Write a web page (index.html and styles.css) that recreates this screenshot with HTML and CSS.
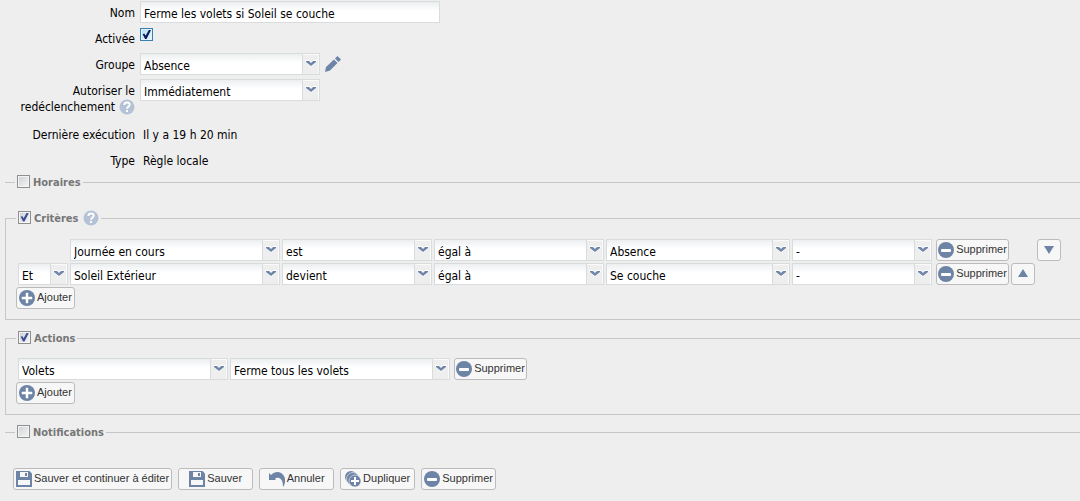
FILE: index.html
```html
<!DOCTYPE html>
<html lang="fr">
<head>
<meta charset="utf-8">
<title>Règle</title>
<link rel="stylesheet" href="styles.css">
</head>
<body>
<svg class="sprite" aria-hidden="true">
  <symbol id="chevron" viewBox="0 0 16 20"><path d="M2 6h4l2 2 2-2h4v1l-6 6-6-6z" fill="#fff"/><path d="M3 7h3l2 2 2-2h3v1l-5 4-5-4z" fill="#6d84a7"/></symbol>
  <symbol id="minus" viewBox="0 0 16 16"><circle cx="8" cy="8" r="8" fill="#6d84a7"/><rect x="3" y="7" width="10" height="3" rx="1" fill="#fff"/></symbol>
  <symbol id="plus" viewBox="0 0 16 16"><circle cx="8" cy="8" r="8" fill="#6d84a7"/><path d="M3 7h4V3h2v4h4v2H9v4H7V9H3z" fill="#fff" stroke="#fff" stroke-width=".5"/></symbol>
  <symbol id="copy" viewBox="0 0 16 16"><circle cx="6" cy="6" r="6" fill="#6d84a7"/><circle cx="8" cy="8" r="6.5" fill="#6d84a7" stroke="#f7f7f7" stroke-width=".6"/><circle cx="10" cy="10" r="6" fill="#6d84a7" stroke="#f7f7f7" stroke-width=".6"/><path d="M6 9h3V6h2v3h3v2h-3v3H9v-3H6z" fill="#fff"/></symbol>
  <symbol id="disk" viewBox="0 0 16 16"><path d="M0 0h13.500l2.500 2.500V16H0z" fill="#6d84a7"/><path d="M4 1h8v5H4zM2 9h12v5H2z" fill="#f7f7f7"/><path d="M9 2h2v3H9z" fill="#6d84a7"/></symbol>
  <symbol id="undo" viewBox="0 0 16 16"><path d="M0 2l2 2C6 0 12 0 15 5c2 4 1 8-1 11 0-5-1-8-4-9-2-.6-3 0-4 1l1 1H0z" fill="#6d84a7"/></symbol>
  <symbol id="help" viewBox="0 0 16 16"><circle cx="8" cy="8" r="7.500" fill="#b5c1d4"/><path d="M5.300 6C5.400 4.300 6.500 3.500 8 3.500S10.700 4.400 10.700 5.800C10.700 7.600 8 7.700 8 9.800" fill="none" stroke="#fff" stroke-width="1.900"/><rect x="7" y="11" width="2" height="2" fill="#fff"/></symbol>
  <symbol id="pencil" viewBox="0 0 16 16"><path d="M0 16l1-5 8-7.500L12.500 7 5 14.500zM10 2.500L12.500 0 16 3.500 13.500 6z" fill="#6d84a7"/></symbol>
  <symbol id="down" viewBox="0 0 16 16"><path d="M3 4h10l-5 8z" fill="#6d84a7"/></symbol>
  <symbol id="up" viewBox="0 0 16 16"><path d="M3 11h10L8 3z" fill="#6d84a7"/></symbol>
</svg>
<form>
  <div class="fields">
    <div class="field">
      <label class="name" for="nom">Nom</label>
      <input class="text" id="nom" type="text" value="Ferme les volets si Soleil se couche">
    </div>
    <div class="field">
      <label class="name" for="active">Activée</label>
      <input class="check check-active" id="active" type="checkbox" checked>
    </div>
    <div class="field">
      <label class="name" for="groupe">Groupe</label>
      <span class="combo combo-group"><select id="groupe"><option>Absence</option></select><svg><use href="#chevron"/></svg></span>
      <button class="edit" type="button" aria-label="Modifier"><svg class="icon"><use href="#pencil"/></svg></button>
    </div>
    <div class="field field-tall">
      <label class="name" for="redec">Autoriser le <span class="with-help">redéclenchement <svg class="icon"><use href="#help"/></svg></span></label>
      <span class="combo combo-group"><select id="redec"><option>Immédiatement</option></select><svg><use href="#chevron"/></svg></span>
    </div>
    <div class="field"><span class="name">Dernière exécution</span><span class="value">Il y a 19 h 20 min</span></div>
    <div class="field"><span class="name">Type</span><span class="value">Règle locale</span></div>
  </div>

  <fieldset class="closed">
    <legend><input class="check" id="horaires" type="checkbox"><label for="horaires">Horaires</label></legend>
  </fieldset>

  <fieldset>
    <legend><input class="check" id="criteres" type="checkbox" checked><label for="criteres">Critères</label><svg class="icon"><use href="#help"/></svg></legend>
    <div class="criteria">
      <span class="combo subject"><select aria-label="Sujet"><option>Journée en cours</option></select><svg><use href="#chevron"/></svg></span>
      <span class="combo"><select aria-label="Verbe"><option>est</option></select><svg><use href="#chevron"/></svg></span>
      <span class="combo"><select aria-label="Comparaison"><option>égal à</option></select><svg><use href="#chevron"/></svg></span>
      <span class="combo"><select aria-label="Valeur"><option>Absence</option></select><svg><use href="#chevron"/></svg></span>
      <span class="combo"><select aria-label="Option"><option>-</option></select><svg><use href="#chevron"/></svg></span>
      <button class="btn remove" type="button"><svg class="icon"><use href="#minus"/></svg><span>Supprimer</span></button>
      <button class="btn move-down" type="button" aria-label="Descendre"><svg class="icon"><use href="#down"/></svg></button>

      <span class="combo join"><select aria-label="Opérateur"><option>Et</option></select><svg><use href="#chevron"/></svg></span>
      <span class="combo"><select aria-label="Sujet"><option>Soleil Extérieur</option></select><svg><use href="#chevron"/></svg></span>
      <span class="combo"><select aria-label="Verbe"><option>devient</option></select><svg><use href="#chevron"/></svg></span>
      <span class="combo"><select aria-label="Comparaison"><option>égal à</option></select><svg><use href="#chevron"/></svg></span>
      <span class="combo"><select aria-label="Valeur"><option>Se couche</option></select><svg><use href="#chevron"/></svg></span>
      <span class="combo"><select aria-label="Option"><option>-</option></select><svg><use href="#chevron"/></svg></span>
      <button class="btn remove" type="button"><svg class="icon"><use href="#minus"/></svg><span>Supprimer</span></button>
      <button class="btn" type="button" aria-label="Monter"><svg class="icon"><use href="#up"/></svg></button>
    </div>
    <button class="btn" type="button"><svg class="icon"><use href="#plus"/></svg><span>Ajouter</span></button>
  </fieldset>

  <fieldset>
    <legend><input class="check" id="actions" type="checkbox" checked><label for="actions">Actions</label></legend>
    <div class="actions">
      <span class="combo"><select aria-label="Cible"><option>Volets</option></select><svg><use href="#chevron"/></svg></span>
      <span class="combo"><select aria-label="Action"><option>Ferme tous les volets</option></select><svg><use href="#chevron"/></svg></span>
      <button class="btn remove" type="button"><svg class="icon"><use href="#minus"/></svg><span>Supprimer</span></button>
    </div>
    <button class="btn" type="button"><svg class="icon"><use href="#plus"/></svg><span>Ajouter</span></button>
  </fieldset>

  <fieldset class="closed">
    <legend><input class="check" id="notifications" type="checkbox"><label for="notifications">Notifications</label></legend>
  </fieldset>

  <div class="toolbar">
    <button class="btn" type="button"><svg class="icon"><use href="#disk"/></svg><span>Sauver et continuer à éditer</span></button>
    <button class="btn" type="button"><svg class="icon"><use href="#disk"/></svg><span>Sauver</span></button>
    <button class="btn" type="button"><svg class="icon"><use href="#undo"/></svg><span>Annuler</span></button>
    <button class="btn" type="button"><svg class="icon"><use href="#copy"/></svg><span>Dupliquer</span></button>
    <button class="btn" type="button"><svg class="icon"><use href="#minus"/></svg><span>Supprimer</span></button>
  </div>
</form>
</body>
</html>
```
FILE: styles.css
```css
* { box-sizing: border-box; }
body {
  margin: 0;
  background: #eee;
  color: #000;
  font: 12px/16px "DejaVu Sans Condensed", "DejaVu Sans", sans-serif;
  overflow-x: hidden;
}
.sprite { position: absolute; width: 0; height: 0; }
.icon { width: 16px; height: 16px; flex: none; }

.fields { display: grid; gap: 4px; padding-top: 1px; }
.field { display: flex; align-items: flex-start; gap: 5px; min-height: 22px; }
.field-tall { min-height: 40px; }
.name { width: 135px; padding: 4px 0 2px 15px; text-align: right; flex: none; }
.value { padding: 4px 0 2px 3px; }
.with-help { display: flex; justify-content: flex-end; gap: 4px; }

.text, .combo select {
  height: 22px;
  margin: 0;
  padding: 3px 3px 0;
  border: 1px solid #d9dcdd;
  border-radius: 0;
  background: linear-gradient(#eceff0, #fff 9px);
  color: #000;
  font: inherit;
}
.text { width: 300px; }
.combo { display: grid; }
.combo-group { width: 180px; }
.combo select { grid-area: 1 / 1; appearance: none; width: 100%; min-width: 0; }
.combo svg {
  grid-area: 1 / 1;
  justify-self: end;
  align-self: center;
  width: 17px;
  height: 20px;
  margin-right: 1px;
  border-left: 1px solid #d9dcdd;
  background: #eee;
  box-shadow: inset -1px 1px #fafafa;
  pointer-events: none;
}
.edit { margin: 3px 0 0; padding: 0; border: 0; background: none; height: 16px; }

.check {
  appearance: none;
  flex: none;
  display: grid;
  place-items: center;
  width: 13px;
  height: 13px;
  margin: 0;
  border: 1px solid #8e8f8f;
  background: linear-gradient(135deg, #cdd1d5, #f6f6f6);
  box-shadow: inset 0 0 0 1px #f4f4f4;
}
.check:checked::before {
  content: "";
  width: 9px;
  height: 9px;
  background: #3d4f94;
  clip-path: polygon(6% 45%, 28% 42%, 40% 64%, 76% 0, 100% 0, 50% 100%, 34% 100%);
}
.check-active { margin-top: 1px; border-color: #3c7fb1; background: linear-gradient(135deg, #b0dcf5, #eef8fd); box-shadow: inset 0 0 0 1px #def4fd; }
.check-active:checked::before { background: #0c1a5c; }

fieldset {
  min-width: 0;
  margin: 10px 0 0 5px;
  padding: 12px 10px 10px;
  border: 1px solid #c6c6c6;
  border-right: 0;
}
fieldset.closed { margin-top: 3px; padding: 0 10px; border-width: 1px 0 0; }
.closed + fieldset { margin-top: 20px; }
fieldset + fieldset.closed { margin-top: 9px; }
legend {
  display: flex;
  align-items: center;
  gap: 3px;
  height: 16px;
  padding: 0 2px;
  color: #777;
  font-size: 11px;
  font-weight: bold;
}
legend label { padding-top: 1px; }
legend .check { margin-bottom: 2px; }
legend .icon { margin-left: 2px; }

.criteria, .actions { display: grid; gap: 2px; padding-left: 2px; margin-bottom: 2px; justify-content: start; }
.criteria { margin-top: 1px; grid-template-columns: 50px 210px 150px 170px 184px 140px 75px 24px 24px; }
.actions { grid-template-columns: 210px 220px 75px; }
.subject { grid-column: 2; }
.join { grid-column: 1; }
.remove { margin-left: 2px; }
.move-down { grid-column: 9; }

.btn {
  display: inline-flex;
  align-items: center;
  justify-content: center;
  gap: 2px;
  height: 22px;
  padding: 0 2px;
  border: 1px solid #bbb;
  border-radius: 3px;
  background: #f7f7f7;
  color: #333;
  font: 11px/16px "Liberation Sans", Arial, sans-serif;
  white-space: nowrap;
  vertical-align: top;
}
.btn span { padding-bottom: 2px; }
.toolbar { display: flex; gap: 6px; padding: 28px 13px 12px; }
.toolbar .btn { min-width: 75px; }
```
